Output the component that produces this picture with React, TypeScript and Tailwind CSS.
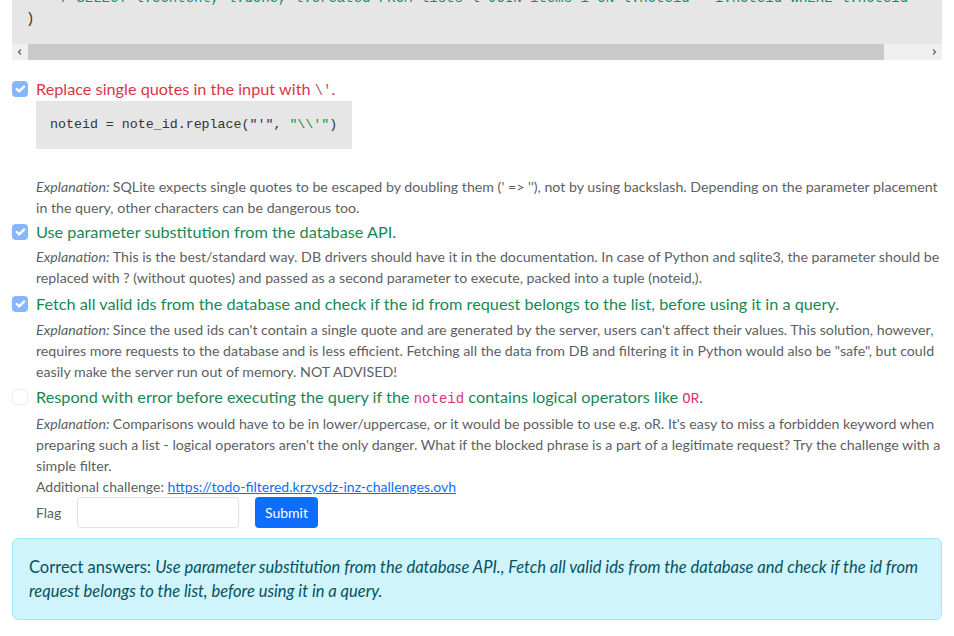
import React from 'react'

const mono = "font-['Liberation_Mono','DejaVu_Sans_Mono',monospace]"

function Check({ checked }: { checked: boolean }) {
  if (!checked) {
    return <span className="mt-1 h-4 w-4 shrink-0 rounded border border-[#eceef1] bg-white" />
  }
  return (
    <span className="mt-1 flex h-4 w-4 shrink-0 items-center justify-center rounded bg-[#86b7fe]">
      <svg viewBox="0 0 20 20" className="h-4 w-4">
        <path d="M6 10l3 3 6-6" fill="none" stroke="#fff" strokeWidth="3" strokeLinecap="round" strokeLinejoin="round" />
      </svg>
    </span>
  )
}

function Option({ checked, color, className, children }: { checked: boolean; color: string; className: string; children: React.ReactNode }) {
  return (
    <div className={`flex h-6 gap-2 ${className}`}>
      <Check checked={checked} />
      <div className={`whitespace-nowrap text-[16.25px] leading-6 ${color}`}>{children}</div>
    </div>
  )
}

function Explanation({ lines, className }: { lines: string[]; className: string }) {
  return (
    <div className={`pl-6 text-[14.2px] leading-[21px] text-[#5c5f63] ${className}`}>
      {lines.map((l, i) => (
        <div key={i} className="h-[21px] whitespace-nowrap">
          {i === 0 && <em>Explanation: </em>}
          {l}
        </div>
      ))}
    </div>
  )
}

const inlineCode = `${mono} text-[14px] leading-none`

export default function App() {
  return (
    <div className="px-3 pb-4 font-['Lato','Noto_Sans',sans-serif] text-[#212529]">
      {/* top code sample, scrolled past its first lines */}
      <div className="-mt-[26px]">
        <pre className={`overflow-hidden bg-[#e6e6e6] p-[14px] text-sm leading-[21px] ${mono}`}>
          <span className="text-[#1a8a6a]">
            {'    f"SELECT l.content, l.done, l.created FROM lists l JOIN items i ON l.noteid = i.noteid WHERE l.noteid = \''}
          </span>
          <span className="text-[#3b82c4]">{'{noteid}'}</span>
          <span className="text-[#1a8a6a]">{'\'"'}</span>
          {'\n'}
          <span className="text-[#333]">)</span>
        </pre>
        <div className="flex h-4 items-center bg-[#f0f0f0]">
          <div className="flex w-4 items-center justify-center">
            <svg viewBox="0 0 8 8" className="h-2 w-2"><path d="M5 1.5L2.5 4 5 6.5" fill="none" stroke="#606060" strokeWidth="1.2" /></svg>
          </div>
          <div className="h-4 w-[856px] bg-[#c9c9c9]" />
          <div className="flex-1" />
          <div className="flex w-4 items-center justify-center">
            <svg viewBox="0 0 8 8" className="h-2 w-2"><path d="M3 1.5L5.5 4 3 6.5" fill="none" stroke="#606060" strokeWidth="1.2" /></svg>
          </div>
        </div>
      </div>

      <Option checked color="text-[#dc3545]" className="mt-[17px]">
        Replace single quotes in the input with <code className={`${inlineCode} text-[#b5575f]`}>\'</code>.
      </Option>
      <div className="pl-6">
        <pre className={`flex h-12 w-[316px] items-center bg-[#e6e6e6] px-[14px] text-[13.3px] leading-5 text-[#333] ${mono}`}>
          <span>
            {'noteid = note_id.replace("\'", '}
            <span className="text-[#1a8a6a]">{'"\\\\\'"'}</span>
            {')'}
          </span>
        </pre>
      </div>
      <Explanation
        className="mt-[27px]"
        lines={[
          "SQLite expects single quotes to be escaped by doubling them (' => ''), not by using backslash. Depending on the parameter placement",
          'in the query, other characters can be dangerous too.',
        ]}
      />

      <Option checked color="text-[#198754]" className="mt-[2px]">
        Use parameter substitution from the database API.
      </Option>
      <Explanation
        className="mt-[2px]"
        lines={[
          'This is the best/standard way. DB drivers should have it in the documentation. In case of Python and sqlite3, the parameter should be',
          'replaced with ? (without quotes) and passed as a second parameter to execute, packed into a tuple (noteid,).',
        ]}
      />

      <Option checked color="text-[#198754]" className="mt-[4px]">
        Fetch all valid ids from the database and check if the id from request belongs to the list, before using it in a query.
      </Option>
      <Explanation
        className="mt-[3px]"
        lines={[
          "Since the used ids can't contain a single quote and are generated by the server, users can't affect their values. This solution, however,",
          'requires more requests to the database and is less efficient. Fetching all the data from DB and filtering it in Python would also be "safe", but could',
          'easily make the server run out of memory. NOT ADVISED!',
        ]}
      />

      <Option checked={false} color="text-[#198754]" className="mt-[3px]">
        Respond with error before executing the query if the{' '}
        <code className={`${inlineCode} text-[#d63384]`}>noteid</code> contains logical operators like{' '}
        <code className={`${inlineCode} text-[#d63384]`}>OR</code>.
      </Option>
      <Explanation
        className="mt-[4px]"
        lines={[
          "Comparisons would have to be in lower/uppercase, or it would be possible to use e.g. oR. It's easy to miss a forbidden keyword when",
          "preparing such a list - logical operators aren't the only danger. What if the blocked phrase is a part of a legitimate request? Try the challenge with a",
          'simple filter.',
        ]}
      />
      <div className="h-[21px] pl-6 text-sm leading-[21px] text-[#5c5f63]">
        Additional challenge:{' '}
        <a href="#" className="text-[#0d6efd] underline">
          https://todo-filtered.krzysdz-inz-challenges.ovh
        </a>
      </div>

      <div className="flex h-[31px] items-center pl-6 text-sm">
        <label className="w-[41px] text-[#5c5f63]">Flag</label>
        <input className="h-[31px] w-[162px] rounded border border-[#dee2e6] bg-white px-2" />
        <button className="ml-4 h-[31px] rounded bg-[#0d6efd] px-[10px] text-white">Submit</button>
      </div>

      <div className="mt-[10px] rounded-md border border-[#9eeaf9] bg-[#cff4fc] p-4 text-[16.5px] leading-6 text-[#055160]">
        Correct answers:{' '}
        <em>
          Use parameter substitution from the database API., Fetch all valid ids from the database and check if the id from
          <br />
          request belongs to the list, before using it in a query.
        </em>
      </div>
    </div>
  )
}
